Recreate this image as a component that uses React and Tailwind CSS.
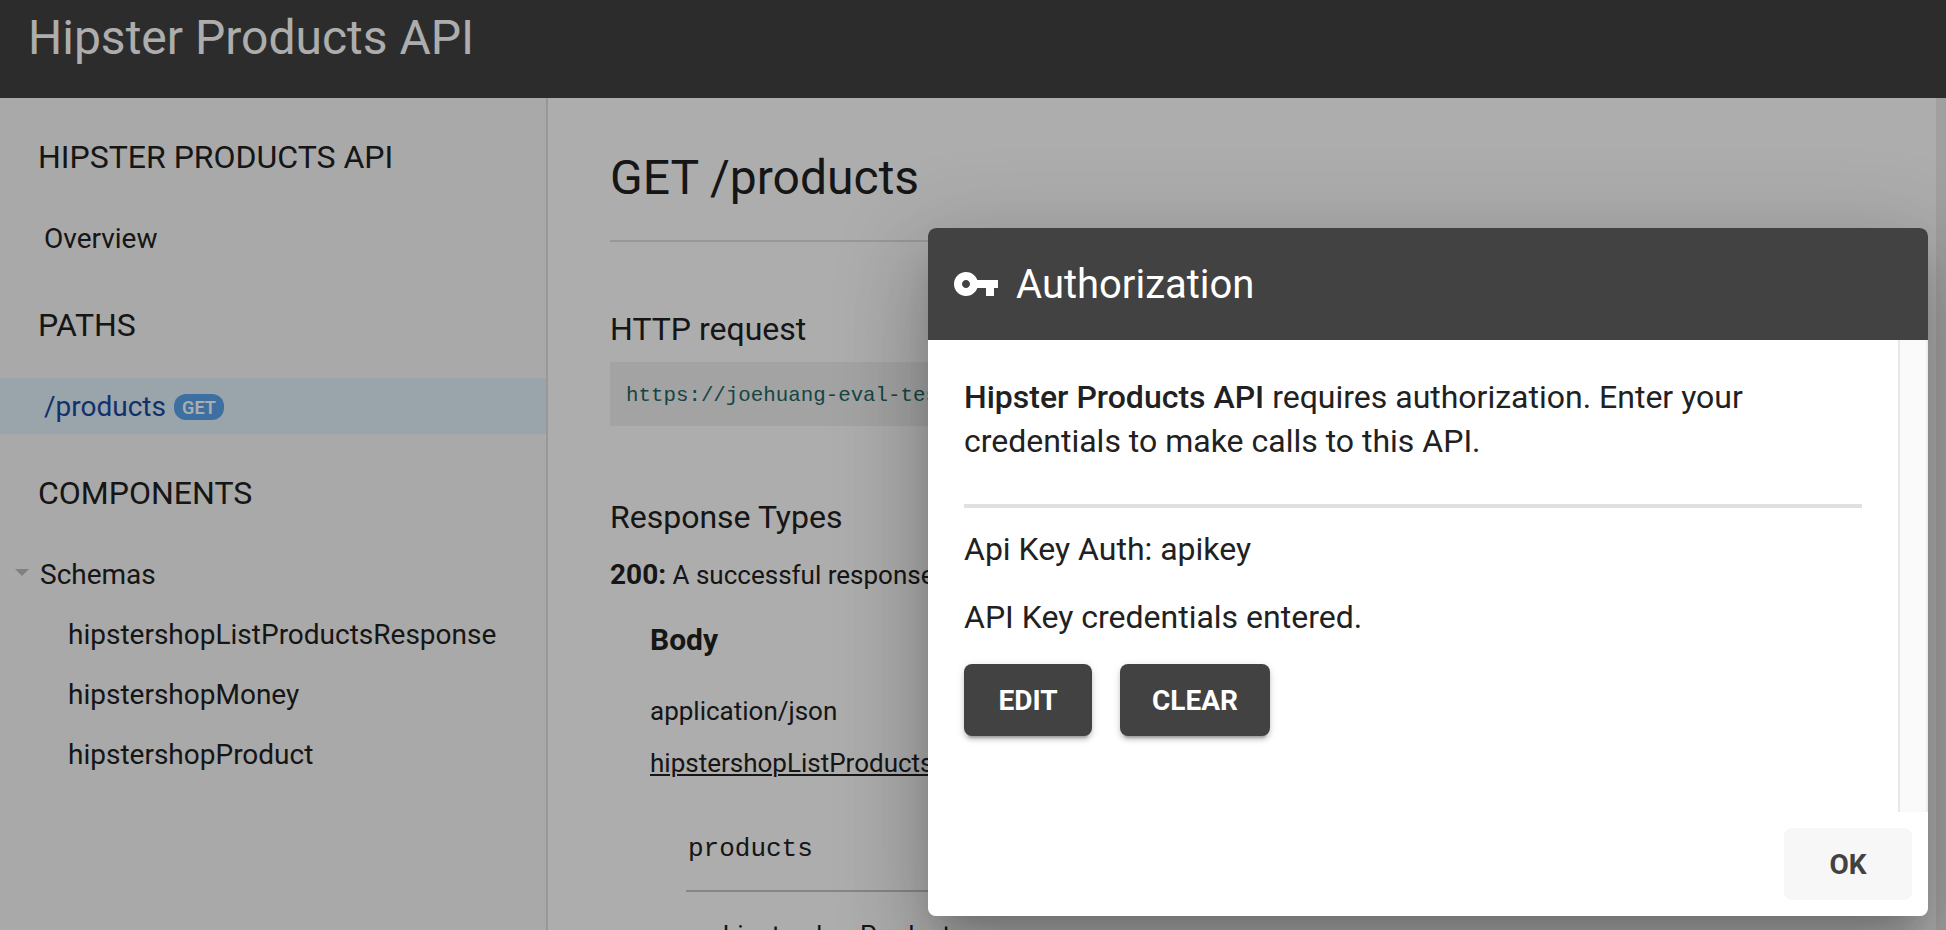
const schemas = ["hipstershopListProductsResponse", "hipstershopMoney", "hipstershopProduct"];

function NavHeading({ children }) {
  return <h2 className="flex h-28 items-center pt-1.5 pl-[38px] text-[32px] leading-10">{children}</h2>;
}

function Sidebar() {
  return (
    <nav className="w-[548px] shrink-0 border-r-2 border-[#e0e0e0] bg-[#fafafa] text-[28px]">
      <NavHeading>HIPSTER PRODUCTS API</NavHeading>
      <div className="flex h-14 items-center pt-px pl-11">Overview</div>
      <NavHeading>PATHS</NavHeading>
      <div className="flex h-14 items-center gap-2 bg-[#e3f2fd] pl-11 text-[#1a49a0]">
        <span className="pt-px">/products</span>
        <span className="mt-0.5 flex h-[26px] w-[50px] items-center justify-center rounded-[12px] bg-[#5ca4ee] pt-px text-[18px] leading-none font-semibold text-white">
          GET
        </span>
      </div>
      <NavHeading>COMPONENTS</NavHeading>
      <div className="flex h-14 items-center gap-[11px] pl-[15px]">
        <svg className="-mt-[3px] h-[7px] w-[14px]" viewBox="0 0 14 7">
          <path d="M0 0h14L7 7z" fill="#bdbdbd" />
        </svg>
        <span className="pt-px">Schemas</span>
      </div>
      <ul className="pt-0.5 pl-[68px]">
        {schemas.map((name) => (
          <li key={name} className="flex h-[60px] items-center pt-px">{name}</li>
        ))}
      </ul>
    </nav>
  );
}

function Documentation() {
  return (
    <main className="min-w-0 flex-1 bg-white pr-[62px] pl-[62px] text-[26px] leading-8 whitespace-nowrap">
      <h1 className="mt-[52px] text-[48px] leading-[56px]">GET /products</h1>
      <hr className="mt-[34px] h-0.5 border-0 bg-[#e0e0e0]" />
      <h3 className="mt-[67px] text-[32px] leading-10">HTTP request</h3>
      <div className="mt-[13px] flex h-16 items-center bg-[#f1f1f1] pt-[3px] pl-4 font-['Liberation_Mono',monospace] text-[20.8px] text-[#1f6663]">
        https://joehuang-eval-tes
      </div>
      <h3 className="mt-[71px] text-[32px] leading-10">Response Types</h3>
      <p className="mt-[22px]">
        <b className="text-[28px] leading-none">200:</b> A successful response
      </p>
      <div className="pl-10">
        <h4 className="mt-7 text-[30px] leading-[41px] font-bold">Body</h4>
        <p className="mt-[35px]">application/json</p>
        <p className="mt-5">
          <a className="underline decoration-2 underline-offset-2">hipstershopListProducts</a>
        </p>
        <div className="pl-9">
          <p className="mt-[54px] pl-0.5 font-['Liberation_Mono',monospace]">products</p>
          <hr className="mt-[25px] h-0.5 border-0 bg-[#c6c6c6]" />
          <p className="mt-[27px] pl-[37px]">hipstershopProduct</p>
        </div>
      </div>
    </main>
  );
}

function DialogButton({ className, children }) {
  return (
    <button
      className={`flex h-[72px] items-center justify-center rounded-lg pt-px text-[28px] leading-none font-bold ${className}`}
    >
      {children}
    </button>
  );
}

function AuthorizationDialog() {
  return (
    <section className="absolute top-[228px] left-[928px] flex h-[688px] w-[1000px] flex-col overflow-hidden rounded-lg bg-white text-[32px] leading-[44px] text-[#212121]">
      <header className="flex h-28 shrink-0 items-center gap-4 bg-[#424242] pl-6 text-white">
        <svg className="size-12" viewBox="0 0 24 24" fill="currentColor">
          <path d="M12.65 10C11.83 7.67 9.61 6 7 6c-3.31 0-6 2.69-6 6s2.69 6 6 6c2.61 0 4.83-1.67 5.65-4H17v4h4v-4h2v-4H12.65zM7 14c-1.1 0-2-.9-2-2s.9-2 2-2 2 .9 2 2-.9 2-2 2z" />
        </svg>
        <h2 className="pt-px text-[40px] leading-[44px]">Authorization</h2>
      </header>
      <div className="flex h-[472px] shrink-0">
        <div className="flex-1 px-9 pt-[35px]">
          <p>
            <b className="font-medium">Hipster Products API</b> requires authorization. Enter your
            <br />
            credentials to make calls to this API.
          </p>
          <hr className="mt-[41px] h-1 border-0 bg-[#e0e0e0]" />
          <p className="mt-[19px]">Api Key Auth: apikey</p>
          <p className="mt-6">API Key credentials entered.</p>
          <div className="mt-[25px] flex gap-7">
            <DialogButton className="w-32 bg-[#424242] text-white shadow-[0_6px_2px_-4px_rgba(0,0,0,.2),0_4px_4px_rgba(0,0,0,.14),0_2px_10px_rgba(0,0,0,.12)]">
              EDIT
            </DialogButton>
            <DialogButton className="w-[150px] bg-[#424242] text-white shadow-[0_6px_2px_-4px_rgba(0,0,0,.2),0_4px_4px_rgba(0,0,0,.14),0_2px_10px_rgba(0,0,0,.12)]">
              CLEAR
            </DialogButton>
          </div>
        </div>
        <div className="w-[30px] shrink-0 border-x-2 border-l-[#e8e8e8] border-r-[#ededed] bg-[#fafafa]" />
      </div>
      <footer className="flex flex-1 items-center justify-end pr-4">
        <DialogButton className="w-32 bg-[#f7f7f7] text-[#424242]">OK</DialogButton>
      </footer>
    </section>
  );
}

export default function App() {
  return (
    <div className="relative h-[930px] w-[1946px] overflow-hidden font-[Roboto,sans-serif] text-[#212121]">
      <div className="flex h-full flex-col">
        <header className="h-[98px] shrink-0 bg-[#424242] pt-[10px] pl-7 text-[48px] leading-[56px] text-white">
          Hipster Products API
        </header>
        <div className="flex min-h-0 flex-1 overflow-hidden">
          <Sidebar />
          <Documentation />
          <div className="w-2.5 shrink-0 bg-[#ececec]" />
        </div>
      </div>
      <div className="absolute inset-0 bg-black/32" />
      <div className="absolute top-[228px] left-[928px] h-[688px] w-[1000px] rounded-lg shadow-[0_22px_30px_-14px_rgba(0,0,0,.2),0_48px_76px_6px_rgba(0,0,0,.14),0_18px_92px_16px_rgba(0,0,0,.12)]" />
      <AuthorizationDialog />
    </div>
  );
}
